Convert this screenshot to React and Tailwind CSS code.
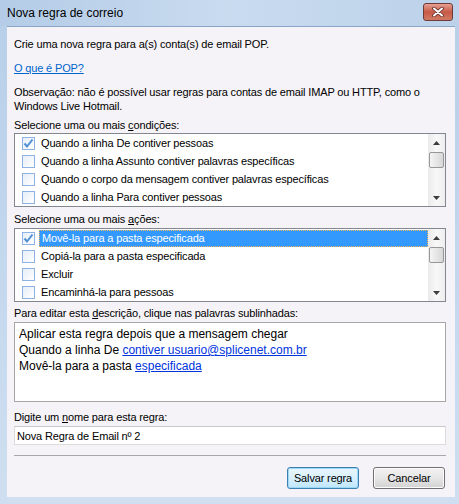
import React from 'react';

const conditions = [
  { label: 'Quando a linha De contiver pessoas', checked: true },
  { label: 'Quando a linha Assunto contiver palavras específicas', checked: false },
  { label: 'Quando o corpo da mensagem contiver palavras específicas', checked: false },
  { label: 'Quando a linha Para contiver pessoas', checked: false },
];

const actions = [
  { label: 'Movê-la para a pasta especificada', checked: true, selected: true },
  { label: 'Copiá-la para a pasta especificada', checked: false },
  { label: 'Excluir', checked: false },
  { label: 'Encaminhá-la para pessoas', checked: false },
];

const CheckBox = ({ checked }) => (
  <span className="w-[13px] h-[13px] shrink-0 border border-[#8db2e3] bg-gradient-to-br from-[#e6eef7] to-white flex items-center justify-center">
    {checked && (
      <svg width="11" height="11" viewBox="0 0 11 11">
        <path d="M1.5 5.5 L4 8.5 L9.5 1.5" fill="none" stroke="#4f8fd6" strokeWidth="2" />
      </svg>
    )}
  </span>
);

const ScrollBar = () => (
  <div className="w-[17px] shrink-0 bg-gradient-to-r from-[#eaeaea] via-[#f8f8f8] to-[#eeeeee] flex flex-col items-center">
    <div className="h-[17px] w-full flex items-center justify-center">
      <svg width="7" height="4" viewBox="0 0 7 4"><path d="M0 4 L3.5 0 L7 4 Z" fill="#3c3c3c" /></svg>
    </div>
    <div className="h-[16px] w-[15px] mt-[1px] rounded-[2px] border border-[#979797] bg-gradient-to-r from-[#f4f4f4] to-[#d8d8d8]" />
    <div className="flex-1" />
    <div className="h-[17px] w-full flex items-center justify-center">
      <svg width="7" height="4" viewBox="0 0 7 4"><path d="M0 0 L7 0 L3.5 4 Z" fill="#3c3c3c" /></svg>
    </div>
  </div>
);

const RuleList = ({ items }) => (
  <div className="h-[74px] border border-[#828790] bg-white flex overflow-hidden">
    <div className="flex-1 overflow-hidden">
      {items.map((item) => (
        <div key={item.label} className="h-[18px] flex items-center pl-[7px]">
          <CheckBox checked={item.checked} />
          <span
            className={`ml-[4px] h-[17px] flex items-center px-[2px] ${
              item.selected
                ? 'flex-1 bg-[#3399ff] text-white border border-dotted border-[#f3b35a]'
                : 'text-black'
            }`}
          >
            {item.label}
          </span>
        </div>
      ))}
    </div>
    <ScrollBar />
  </div>
);

export default function App() {
  return (
    <div className="w-[459px] h-[504px] bg-gradient-to-b from-[#b7cfe9] to-[#cfdff1] flex flex-col font-['Liberation_Sans',Arial,sans-serif] text-[11px] leading-[14px] tracking-[-0.15px] text-black select-none">
      {/* title bar */}
      <div className="h-[26px] shrink-0 flex items-center pl-[7px] pr-[6px] bg-gradient-to-r from-[#b4cce7] via-[#c9dbef] to-[#bcd2ea]">
        <span className="text-[12px] tracking-normal text-black">Nova regra de correio</span>
        <div className="ml-auto w-[30px] h-[18px] -mt-[3px] rounded-[3px] border border-[#6d3a3a] bg-gradient-to-b from-[#e8a093] via-[#c75a47] to-[#d27a64] flex items-center justify-center">
          <svg width="12" height="10" viewBox="0 0 12 10">
            <path d="M2 1.5 L10 8.5 M10 1.5 L2 8.5" stroke="#5a2a24" strokeWidth="3.6" strokeLinecap="round" />
            <path d="M2 1.5 L10 8.5 M10 1.5 L2 8.5" stroke="#ffffff" strokeWidth="2" strokeLinecap="round" />
          </svg>
        </div>
      </div>

      {/* client area */}
      <div className="flex-1 ml-[7px] mr-[4px] mb-[7px] bg-[#f5f3f7] border-t border-[#8aa5c5] pl-[7px] pr-[9px] pt-[10px] flex flex-col">
        <p>Crie uma nova regra para a(s) conta(s) de email POP.</p>
        <a className="mt-[10px] text-[#0066cc] underline w-fit">O que é POP?</a>
        <p className="mt-[10px]">
          Observação: não é possível usar regras para contas de email IMAP ou HTTP, como o Windows Live Hotmail.
        </p>

        <p className="mt-[5px] mb-[1px]">
          Selecione uma ou mais <u>c</u>ondições:
        </p>
        <RuleList items={conditions} />

        <p className="mt-[5px] mb-[2px]">
          Selecione uma ou mais <u>a</u>ções:
        </p>
        <RuleList items={actions} />

        <p className="mt-[4px] mb-[2px]">
          Para editar esta <u>d</u>escrição, clique nas palavras sublinhadas:
        </p>
        <div className="h-[80px] border border-[#a7a7a7] bg-white pl-[4px] pt-[3px] text-[12px] leading-[16px] tracking-normal">
          <p>Aplicar esta regra depois que a mensagem chegar</p>
          <p>
            Quando a linha De <a className="text-[#0033dd] underline">contiver usuario@splicenet.com.br</a>
          </p>
          <p>
            Movê-la para a pasta <a className="text-[#0033dd] underline">especificada</a>
          </p>
        </div>

        <p className="mt-[8px] mb-[2px]">
          Digite um <u>n</u>ome para esta regra:
        </p>
        <div className="h-[19px] border border-[#dcdcdc] border-t-[#c8c8c8] bg-white flex items-center pl-[2px]">
          Nova Regra de Email nº 2
        </div>

        <div className="mt-[10px] h-px bg-[#a9a9a9]" />

        <div className="mt-[11px] flex justify-end gap-[14px] pr-[1px]">
          <button className="w-[72px] h-[22px] rounded-[3px] border border-[#3c7fb1] bg-gradient-to-b from-[#eaf6fd] via-[#d9f0fc] to-[#bee6fd] shadow-[inset_0_0_0_1px_#9fd8f7]">
            Salvar regra
          </button>
          <button className="w-[72px] h-[22px] rounded-[3px] border border-[#707070] bg-gradient-to-b from-[#f2f2f2] via-[#e6e6e6] to-[#d2d2d2] shadow-[inset_0_0_0_1px_#fcfcfc]">
            Cancelar
          </button>
        </div>
      </div>
    </div>
  );
}
